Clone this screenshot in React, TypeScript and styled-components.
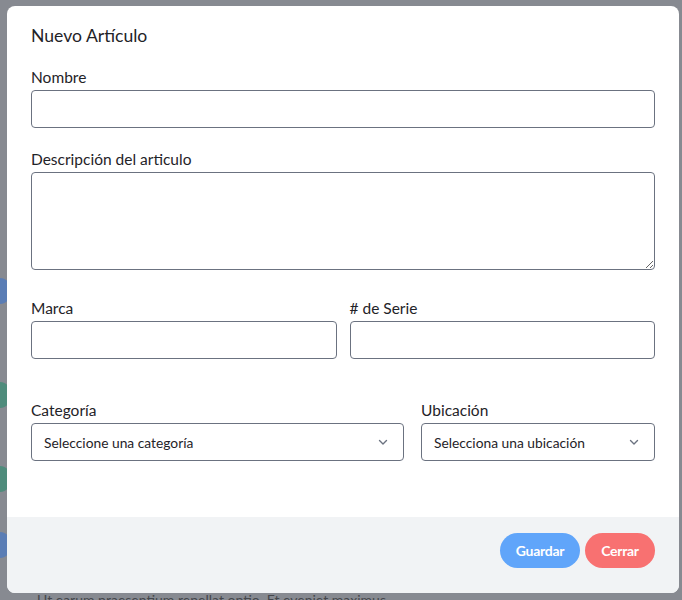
import styled, { createGlobalStyle } from "styled-components";

const GlobalStyle = createGlobalStyle`
  html, body {
    margin: 0;
    padding: 0;
    background: #878a91;
    font-family: Lato, "Open Sans", sans-serif;
  }
  * {
    box-sizing: border-box;
  }
`;

const ChevronDown = () => (
  <svg width="12" height="12" viewBox="0 0 12 12" fill="none">
    <path
      d="M2.5 4.5 6 8l3.5-3.5"
      stroke="#6b7280"
      strokeWidth="1.4"
      strokeLinecap="round"
      strokeLinejoin="round"
    />
  </svg>
);

export default function App() {
  return (
    <>
      <GlobalStyle />
      <Page>
        <Backdrop>
          <Dot color="#5a7db5" top={278} />
          <Dot color="#4f8c7c" top={382} />
          <Dot color="#4f8c7c" top={466} />
          <Dot color="#5a7db5" top={532} />
          <BehindText>Ut earum praesentium repellat optio. Et eveniet maximus</BehindText>
        </Backdrop>
        <Modal>
          <Body>
            <Title>Nuevo Artículo</Title>
            <Field gap={21}>
              <Label>Nombre</Label>
              <Input type="text" />
            </Field>
            <Field gap={21}>
              <Label>Descripción del articulo</Label>
              <TextArea rows={4} />
            </Field>
            <Row gap={28} columns="1fr 1fr" colGap={13}>
              <Field>
                <Label>Marca</Label>
                <Input type="text" />
              </Field>
              <Field>
                <Label># de Serie</Label>
                <Input type="text" />
              </Field>
            </Row>
            <Row gap={41} columns="373px 1fr" colGap={17}>
              <Field>
                <Label>Categoría</Label>
                <SelectBox>
                  <span>Seleccione una categoría</span>
                  <ChevronDown />
                </SelectBox>
              </Field>
              <Field>
                <Label>Ubicación</Label>
                <SelectBox>
                  <span>Selecciona una ubicación</span>
                  <ChevronDown />
                </SelectBox>
              </Field>
            </Row>
          </Body>
          <Footer>
            <Button tone="#60a5fa" width={80}>Guardar</Button>
            <Button tone="#f87171" width={70}>Cerrar</Button>
          </Footer>
        </Modal>
      </Page>
    </>
  );
}

const Page = styled.div`
  position: relative;
  width: 682px;
  height: 600px;
  overflow: hidden;
  background: #878a91;
`;

const Backdrop = styled.div`
  position: absolute;
  inset: 0;
`;

const Dot = styled.div<{ color: string; top: number }>`
  position: absolute;
  left: -14px;
  top: ${({ top }) => top}px;
  width: 26px;
  height: 26px;
  border-radius: 50%;
  background: ${({ color }) => color};
`;

const BehindText = styled.div`
  position: absolute;
  left: 37px;
  top: 591px;
  font-size: 14px;
  color: #45474c;
  white-space: nowrap;
`;

const Modal = styled.div`
  position: absolute;
  left: 7px;
  top: 6px;
  width: 672px;
  height: 587px;
  background: #ffffff;
  border-radius: 8px;
  overflow: hidden;
  display: flex;
  flex-direction: column;
`;

const Body = styled.div`
  flex: 1;
  padding: 20px 24px 0;
  display: flex;
  flex-direction: column;
`;

const Title = styled.h3`
  margin: 0;
  font-size: 17.6px;
  line-height: 20px;
  font-weight: 400;
  color: #1f2328;
`;

const Field = styled.div<{ gap?: number }>`
  display: flex;
  flex-direction: column;
  margin-top: ${({ gap }) => gap ?? 0}px;
`;

const Row = styled.div<{ gap: number; columns: string; colGap: number }>`
  display: grid;
  grid-template-columns: ${({ columns }) => columns};
  column-gap: ${({ colGap }) => colGap}px;
  margin-top: ${({ gap }) => gap}px;
`;

const Label = styled.label`
  font-size: 15.5px;
  line-height: 20px;
  color: #1f2328;
  margin-bottom: 3px;
`;

const Input = styled.input`
  height: 38px;
  width: 100%;
  border: 1px solid #6b7280;
  border-radius: 4px;
  padding: 0 12px;
  font: inherit;
  outline: none;
  background: #fff;
`;

const TextArea = styled.textarea`
  height: 98px;
  width: 100%;
  border: 1px solid #6b7280;
  border-radius: 4px;
  padding: 8px 12px;
  font: inherit;
  outline: none;
  display: block;
`;

const SelectBox = styled.div`
  height: 38px;
  border: 1px solid #6b7280;
  border-radius: 4px;
  padding: 0 14px 0 12px;
  display: flex;
  align-items: center;
  justify-content: space-between;
  font-size: 13.8px;
  color: #1f2328;
`;

const Footer = styled.div`
  height: 76px;
  background: #f1f3f5;
  display: flex;
  justify-content: flex-end;
  align-items: flex-start;
  gap: 5px;
  padding: 16px 24px 0;
`;

const Button = styled.button<{ tone: string; width: number }>`
  height: 35px;
  width: ${({ width }) => width}px;
  border: none;
  border-radius: 18px;
  background: ${({ tone }) => tone};
  color: #fff;
  font-family: Lato, sans-serif;
  font-weight: 700;
  font-size: 14px;
  letter-spacing: -0.3px;
  cursor: pointer;
`;
